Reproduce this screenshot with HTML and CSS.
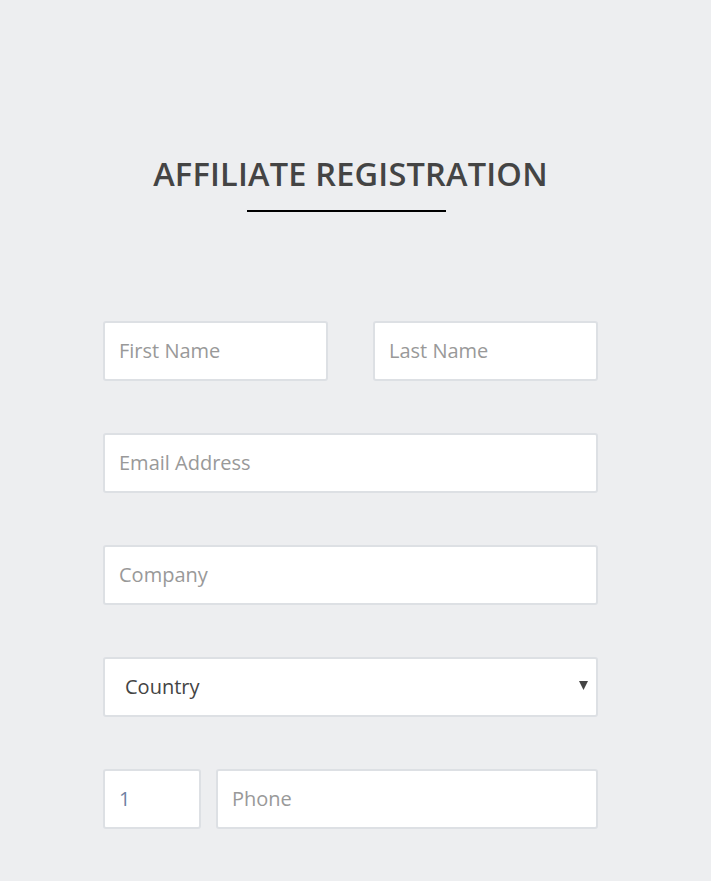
FILE: index.html
```html
<!DOCTYPE html>
<html>
<head>
<meta charset="utf-8">
<link rel="stylesheet" href="styles.css">
</head>
<body>
<div class="page">
  <h1 class="title">AFFILIATE REGISTRATION</h1>
  <div class="rule"></div>
  <form class="form">
    <div class="row">
      <input class="field half" type="text" placeholder="First Name">
      <input class="field half" type="text" placeholder="Last Name">
    </div>
    <div class="row">
      <input class="field full" type="text" placeholder="Email Address">
    </div>
    <div class="row">
      <input class="field full" type="text" placeholder="Company">
    </div>
    <div class="row">
      <div class="select full">
        <span class="select-text">Country</span>
        <svg class="arrow" width="9" height="9" viewBox="0 0 9 9"><polygon points="0,0 9,0 4.5,9" fill="#444"/></svg>
      </div>
    </div>
    <div class="row phone-row">
      <input class="field code" type="text" value="1">
      <input class="field phone" type="text" placeholder="Phone">
    </div>
  </form>
</div>
</body>
</html>
```
FILE: styles.css
```css
html, body {
  margin: 0;
  padding: 0;
  background: #edeef0;
  font-family: "Open Sans", "Liberation Sans", sans-serif;
}
.page {
  width: 495px;
  margin-left: 103px;
  padding-top: 151px;
}
.title {
  margin: 0;
  text-align: center;
  font-size: 32.5px;
  line-height: 46px;
  font-weight: 600;
  color: #444;
  letter-spacing: 0.2px;
}
.rule {
  width: 199px;
  height: 2px;
  background: #000;
  margin: 13px 0 0 144px;
}
.form {
  margin-top: 109px;
  display: flex;
  flex-direction: column;
  gap: 52.5px;
}
.row {
  display: flex;
  justify-content: space-between;
  height: 59.5px;
}
.field, .select {
  box-sizing: border-box;
  height: 59.5px;
  border: 2px solid #dde0e4;
  border-radius: 3px;
  background: #fff;
  font-family: "Open Sans", "Liberation Sans", sans-serif;
  font-size: 20px;
  padding: 0 14px;
  color: #444;
  outline: none;
}
.field::placeholder {
  color: #999;
}
.half { width: 225px; }
.full { width: 496px; }
.code { width: 98px; color: #6f82a3; }
.phone { width: 382px; }
.select {
  display: flex;
  align-items: center;
  justify-content: space-between;
  padding: 0 8px 0 20px;
}
.select-text {
  color: #444;
}
.arrow {
  display: block;
  margin-top: -2px;
}
```
